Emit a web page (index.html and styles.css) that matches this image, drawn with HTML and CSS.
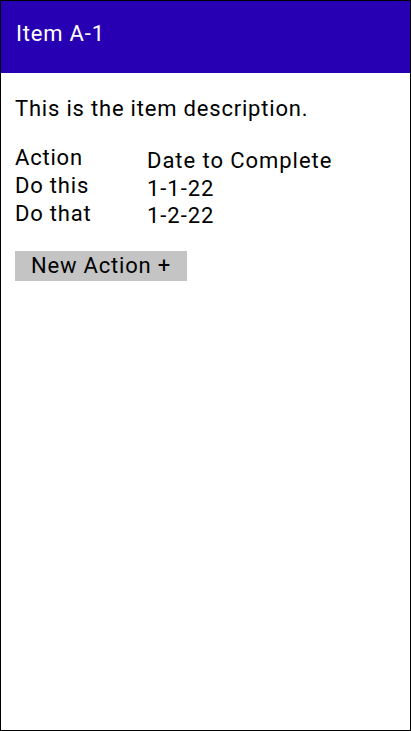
FILE: index.html
```html
<!DOCTYPE html>
<html>
<head>
<meta charset="utf-8">
<link rel="stylesheet" href="styles.css">
</head>
<body>
<div class="screen">
  <header class="bar">Item A-1</header>
  <main class="content">
    <p class="desc">This is the item description.</p>
    <div class="table">
      <div class="col col-action">
        <div class="cell">Action</div>
        <div class="cell">Do this</div>
        <div class="cell">Do that</div>
      </div>
      <div class="col col-date">
        <div class="cell">Date to Complete</div>
        <div class="cell">1-1-22</div>
        <div class="cell">1-2-22</div>
      </div>
    </div>
    <button class="add">New Action +</button>
  </main>
</div>
</body>
</html>
```
FILE: styles.css
```css
html, body { margin: 0; padding: 0; }
body {
  font-family: Roboto, "Noto Sans", sans-serif;
  color: #000; background: #fff;
  font-size: 22px; letter-spacing: 0.8px;
}
.screen {
  box-sizing: border-box;
  width: 411px; height: 731px;
  border: 1px solid #000;
  display: flex; flex-direction: column;
}
.bar {
  background: #2800b4; color: #fff;
  height: 72px; box-sizing: border-box;
  padding: 20px 0 0 15px;
  line-height: 26px;
  flex-shrink: 0;
}
.content { padding: 0 14px; }
.desc { margin: 23px 0 0; line-height: 26px; }
.table {
  margin-top: 22px;
  display: flex;
  line-height: 28px;
}
.col-action { width: 132px; }
.col-date { padding-top: 3px; line-height: 27.5px; letter-spacing: 0.95px; }
.add {
  display: block;
  margin-top: 21px;
  border: none; background: #c4c4c4;
  font-family: inherit; font-size: 22px; letter-spacing: 0.8px; color: #000;
  width: 172px; height: 30px; line-height: 26px;
  padding: 0 0 0 16px; text-align: left;
}
```
